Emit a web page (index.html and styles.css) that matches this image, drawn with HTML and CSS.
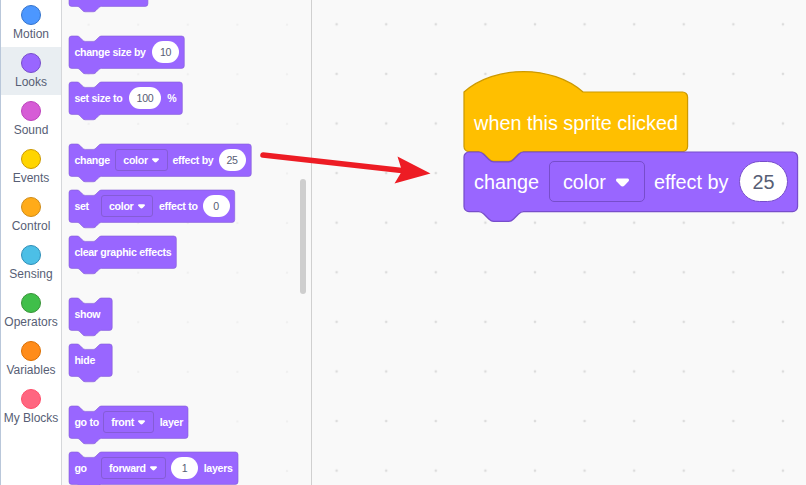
FILE: index.html
```html
<!DOCTYPE html>
<html lang="en">
<head>
<meta charset="utf-8">
<title>Block editor</title>
<link rel="stylesheet" href="styles.css">
</head>
<body>
<div class="editor">
  <nav class="categories">
    <div class="category"><i class="dot motion"></i><span>Motion</span></div>
    <div class="category selected"><i class="dot looks"></i><span>Looks</span></div>
    <div class="category"><i class="dot sound"></i><span>Sound</span></div>
    <div class="category"><i class="dot events"></i><span>Events</span></div>
    <div class="category"><i class="dot control"></i><span>Control</span></div>
    <div class="category"><i class="dot sensing"></i><span>Sensing</span></div>
    <div class="category"><i class="dot operators"></i><span>Operators</span></div>
    <div class="category"><i class="dot variables"></i><span>Variables</span></div>
    <div class="category"><i class="dot custom"></i><span>My Blocks</span></div>
  </nav>

  <section class="palette">
    <div class="block gap-after">
      <svg class="shape"><path transform="scale(.675)" d="M0 4A4 4 0 0 1 4 0H12c2 0 3 1 4 2l4 4c1 1 2 2 4 2h12c2 0 3-1 4-2l4-4c1-1 2-2 4-2H112.9a4 4 0 0 1 4 4v40a4 4 0 0 1-4 4H48c-2 0-3 1-4 2l-4 4c-1 1-2 2-4 2H24c-2 0-3-1-4-2l-4-4c-1-1-2-2-4-2H4a4 4 0 0 1-4-4z"/></svg>
    </div>
    <div class="block change-size">
      <svg class="shape"><path transform="scale(.675)" d="M0 4A4 4 0 0 1 4 0H12c2 0 3 1 4 2l4 4c1 1 2 2 4 2h12c2 0 3-1 4-2l4-4c1-1 2-2 4-2H166.8a4 4 0 0 1 4 4v40a4 4 0 0 1-4 4H48c-2 0-3 1-4 2l-4 4c-1 1-2 2-4 2H24c-2 0-3-1-4-2l-4-4c-1-1-2-2-4-2H4a4 4 0 0 1-4-4z"/></svg>
      <span>change size by</span><span class="value">10</span>
    </div>
    <div class="block set-size gap-after">
      <svg class="shape"><path transform="scale(.675)" d="M0 4A4 4 0 0 1 4 0H12c2 0 3 1 4 2l4 4c1 1 2 2 4 2h12c2 0 3-1 4-2l4-4c1-1 2-2 4-2H163.9a4 4 0 0 1 4 4v40a4 4 0 0 1-4 4H48c-2 0-3 1-4 2l-4 4c-1 1-2 2-4 2H24c-2 0-3-1-4-2l-4-4c-1-1-2-2-4-2H4a4 4 0 0 1-4-4z"/></svg>
      <span>set size to</span><span class="value wide">100</span><span>%</span>
    </div>
    <div class="block change-effect">
      <svg class="shape"><path transform="scale(.675)" d="M0 4A4 4 0 0 1 4 0H12c2 0 3 1 4 2l4 4c1 1 2 2 4 2h12c2 0 3-1 4-2l4-4c1-1 2-2 4-2H266a4 4 0 0 1 4 4v40a4 4 0 0 1-4 4H48c-2 0-3 1-4 2l-4 4c-1 1-2 2-4 2H24c-2 0-3-1-4-2l-4-4c-1-1-2-2-4-2H4a4 4 0 0 1-4-4z"/></svg>
      <span>change</span>
      <span class="menu color-menu">color<svg class="caret" viewBox="0 0 13 9"><path d="M2 .5h9c2 0 2.600 1.500 1.500 2.700L8.500 7.500c-1.200 1.200-2.800 1.200-4 0L.5 3.200C-.6 2 0 .5 2 .5z"/></svg></span>
      <span>effect by</span><span class="value">25</span>
    </div>
    <div class="block set-effect">
      <svg class="shape"><path transform="scale(.675)" d="M0 4A4 4 0 0 1 4 0H12c2 0 3 1 4 2l4 4c1 1 2 2 4 2h12c2 0 3-1 4-2l4-4c1-1 2-2 4-2H241.5a4 4 0 0 1 4 4v40a4 4 0 0 1-4 4H48c-2 0-3 1-4 2l-4 4c-1 1-2 2-4 2H24c-2 0-3-1-4-2l-4-4c-1-1-2-2-4-2H4a4 4 0 0 1-4-4z"/></svg>
      <span>set</span>
      <span class="menu color-menu">color<svg class="caret" viewBox="0 0 13 9"><path d="M2 .5h9c2 0 2.600 1.500 1.500 2.700L8.500 7.500c-1.200 1.200-2.800 1.200-4 0L.5 3.200C-.6 2 0 .5 2 .5z"/></svg></span>
      <span>effect to</span><span class="value">0</span>
    </div>
    <div class="block gap-after">
      <svg class="shape"><path transform="scale(.675)" d="M0 4A4 4 0 0 1 4 0H12c2 0 3 1 4 2l4 4c1 1 2 2 4 2h12c2 0 3-1 4-2l4-4c1-1 2-2 4-2H155a4 4 0 0 1 4 4v40a4 4 0 0 1-4 4H48c-2 0-3 1-4 2l-4 4c-1 1-2 2-4 2H24c-2 0-3-1-4-2l-4-4c-1-1-2-2-4-2H4a4 4 0 0 1-4-4z"/></svg>
      <span>clear graphic effects</span>
    </div>
    <div class="block">
      <svg class="shape"><path transform="scale(.675)" d="M0 4A4 4 0 0 1 4 0H12c2 0 3 1 4 2l4 4c1 1 2 2 4 2h12c2 0 3-1 4-2l4-4c1-1 2-2 4-2H60a4 4 0 0 1 4 4v40a4 4 0 0 1-4 4H48c-2 0-3 1-4 2l-4 4c-1 1-2 2-4 2H24c-2 0-3-1-4-2l-4-4c-1-1-2-2-4-2H4a4 4 0 0 1-4-4z"/></svg>
      <span>show</span>
    </div>
    <div class="block gap-after">
      <svg class="shape"><path transform="scale(.675)" d="M0 4A4 4 0 0 1 4 0H12c2 0 3 1 4 2l4 4c1 1 2 2 4 2h12c2 0 3-1 4-2l4-4c1-1 2-2 4-2H60a4 4 0 0 1 4 4v40a4 4 0 0 1-4 4H48c-2 0-3 1-4 2l-4 4c-1 1-2 2-4 2H24c-2 0-3-1-4-2l-4-4c-1-1-2-2-4-2H4a4 4 0 0 1-4-4z"/></svg>
      <span>hide</span>
    </div>
    <div class="block go-to">
      <svg class="shape"><path transform="scale(.675)" d="M0 4A4 4 0 0 1 4 0H12c2 0 3 1 4 2l4 4c1 1 2 2 4 2h12c2 0 3-1 4-2l4-4c1-1 2-2 4-2H172.3a4 4 0 0 1 4 4v40a4 4 0 0 1-4 4H48c-2 0-3 1-4 2l-4 4c-1 1-2 2-4 2H24c-2 0-3-1-4-2l-4-4c-1-1-2-2-4-2H4a4 4 0 0 1-4-4z"/></svg>
      <span>go to</span>
      <span class="menu front-menu">front<svg class="caret" viewBox="0 0 13 9"><path d="M2 .5h9c2 0 2.600 1.500 1.500 2.700L8.500 7.500c-1.200 1.200-2.800 1.200-4 0L.5 3.200C-.6 2 0 .5 2 .5z"/></svg></span>
      <span>layer</span>
    </div>
    <div class="block go-forward">
      <svg class="shape"><path transform="scale(.675)" d="M0 4A4 4 0 0 1 4 0H12c2 0 3 1 4 2l4 4c1 1 2 2 4 2h12c2 0 3-1 4-2l4-4c1-1 2-2 4-2H246.4a4 4 0 0 1 4 4v40a4 4 0 0 1-4 4H48c-2 0-3 1-4 2l-4 4c-1 1-2 2-4 2H24c-2 0-3-1-4-2l-4-4c-1-1-2-2-4-2H4a4 4 0 0 1-4-4z"/></svg>
      <span>go</span>
      <span class="menu forward-menu">forward<svg class="caret" viewBox="0 0 13 9"><path d="M2 .5h9c2 0 2.600 1.500 1.500 2.700L8.500 7.500c-1.200 1.200-2.800 1.200-4 0L.5 3.200C-.6 2 0 .5 2 .5z"/></svg></span>
      <span class="value">1</span><span>layers</span>
    </div>
    <div class="scrollbar"></div>
  </section>

  <main class="workspace">
    <div class="script">
      <div class="large hat">
        <svg class="shape"><path transform="scale(1.24)" d="M0 0c25-22 71-22 96 0H176.3a4 4 0 0 1 4 4v40a4 4 0 0 1-4 4H48c-2 0-3 1-4 2l-4 4c-1 1-2 2-4 2H24c-2 0-3-1-4-2l-4-4c-1-1-2-2-4-2H4a4 4 0 0 1-4-4z"/></svg>
        <span>when this sprite clicked</span>
      </div>
      <div class="large command">
        <svg class="shape"><path transform="scale(1.24)" d="M0 4A4 4 0 0 1 4 0H12c2 0 3 1 4 2l4 4c1 1 2 2 4 2h12c2 0 3-1 4-2l4-4c1-1 2-2 4-2H265a4 4 0 0 1 4 4v40a4 4 0 0 1-4 4H48c-2 0-3 1-4 2l-4 4c-1 1-2 2-4 2H24c-2 0-3-1-4-2l-4-4c-1-1-2-2-4-2H4a4 4 0 0 1-4-4z"/></svg>
        <span class="label">change</span>
        <span class="menu">color<svg class="caret" viewBox="0 0 13 9"><path d="M2 .5h9c2 0 2.600 1.500 1.500 2.700L8.500 7.500c-1.200 1.200-2.800 1.200-4 0L.5 3.200C-.6 2 0 .5 2 .5z"/></svg></span>
        <span class="label">effect by</span><span class="value">25</span>
      </div>
    </div>
  </main>

  <svg class="pointer" viewBox="0 0 180 40">
    <path class="stem" d="M8 10 149 25.7"/>
    <path class="head" d="M142.5 11.5 175.5 28.5 139.5 38.5 147 26z"/>
  </svg>
</div>
</body>
</html>
```

FILE: styles.css
```css
* { box-sizing: border-box; }

body {
  margin: 0;
  font-family: "Liberation Sans", Arial, sans-serif;
}

.editor {
  position: relative;
  display: flex;
  width: 806px;
  height: 485px;
  overflow: hidden;
  background: #f9f9f9;
}

/* Category column */
.categories {
  width: 62px;
  flex: none;
  border-left: 1px solid #b9c7da;
  border-right: 1px solid #d5d7da;
  background: #fff;
}
.category {
  display: flex;
  flex-direction: column;
  align-items: center;
  height: 48px;
  padding-top: 6px;
  font-size: 12px;
  line-height: 14px;
  color: #575e75;
  white-space: nowrap;
}
.category:first-child { margin-top: -1px; }
.category span { margin-top: 2px; }
.selected { background: #e9eef2; }
.dot {
  width: 20px;
  height: 20px;
  flex: none;
  border: 1px solid;
  border-radius: 50%;
}
.motion { background: #4c97ff; border-color: #3373cc; }
.looks { background: #96f; border-color: #774dcb; }
.sound { background: #d65cd6; border-color: #bd42bd; }
.events { background: #ffd500; border-color: #cc9900; }
.control { background: #ffab19; border-color: #cf8b17; }
.sensing { background: #4cbfe6; border-color: #2e8eb8; }
.operators { background: #40bf4a; border-color: #389438; }
.variables { background: #ff8c1a; border-color: #db6e00; }
.custom { background: #ff6680; border-color: #ff4d6a; }

/* Palette */
.palette {
  position: relative;
  display: flex;
  flex-direction: column;
  gap: 13.6px;
  width: 250px;
  flex: none;
  padding-left: 7px;
  margin-top: -26.3px;
  border-right: 1px solid #d0d0d0;
  background: radial-gradient(circle at 24.8px 24.8px, #f0f0f0 1px, transparent 1.6px) 1.8px 25.9px / 49.6px 49.6px;
}
.block {
  position: relative;
  display: grid;
  align-items: center;
  justify-content: start;
  height: 32.4px;
  flex: none;
  padding-left: 5.4px;
  font-size: 10.6px;
  font-weight: bold;
  letter-spacing: -.29px;
  line-height: 14px;
  color: #fff;
  white-space: nowrap;
}
.gap-after { margin-bottom: 16px; }
.shape {
  position: absolute;
  left: 0;
  top: 0;
  width: 1px;
  height: 1px;
  overflow: visible;
  fill: #96f;
  stroke: #774dcb;
}
.block .shape { stroke: #855cd6; stroke-width: .9; }
.block > span { position: relative; top: .3px; }
.change-size { grid-template-columns: 77.6px 27px; }
.set-size { grid-template-columns: 54.6px 38.3px 10px; }
.change-effect { grid-template-columns: 41.1px 57px 46.1px 27px; }
.set-effect { grid-template-columns: 26.8px 57.8px 43.7px 27px; }
.go-to { grid-template-columns: 29.1px 56.2px 24px; }
.go-forward { grid-template-columns: 26.8px 69.8px 32.7px 30px; }

.value {
  display: flex;
  align-items: center;
  justify-content: center;
  width: 27px;
  height: 21.6px;
  border-radius: 11px;
  background: #fff;
  font-weight: normal;
  color: #575e75;
}
.wide { width: 32px; }
.menu {
  display: flex;
  align-items: center;
  justify-content: space-between;
  height: 22px;
  padding: 0 7.6px 0 6.8px;
  border: 1px solid #855cd6;
  border-radius: 3px;
}
.color-menu { width: 52.3px; }
.front-menu { width: 50.5px; }
.forward-menu { width: 64.8px; }
.caret { width: 7px; height: 5px; flex: none; fill: #fff; }

.scrollbar {
  position: absolute;
  right: 5px;
  top: 205.3px;
  width: 6px;
  height: 115px;
  border-radius: 3px;
  background: #cecece;
}

/* Workspace */
.workspace {
  position: relative;
  flex: 1;
  background: radial-gradient(circle at 24.8px 24.8px, #dcdcdc 1px, transparent 1.7px) -.2px -.5px / 49.6px 49.6px;
}
.script {
  position: absolute;
  left: 152.2px;
  top: 92.3px;
}
.large {
  position: relative;
  display: grid;
  align-items: center;
  justify-content: start;
  height: 59.5px;
  padding-left: 9.9px;
  font-size: 19.84px;
  line-height: 24px;
  color: #fff;
  white-space: nowrap;
}
.large span { position: relative; }
.hat > span { top: 1px; }
.hat .shape { fill: #ffbf00; stroke: #cc9900; }
.command { grid-template-columns: 74.8px 105px 84.8px 50px; }
.command .label { top: .8px; }
.large .menu {
  width: 96px;
  height: 41px;
  padding: 1px 15px 0 13px;
  border-color: #774dcb;
  border-radius: 5px;
}
.large .caret { width: 13px; height: 9px; }
.large .value {
  width: 49.6px;
  height: 40.9px;
  padding-top: 1px;
  border: 1.2px solid #774dcb;
  border-radius: 20.5px;
}

/* Arrow laid over palette and workspace */
.pointer {
  position: absolute;
  left: 255px;
  top: 145px;
  width: 180px;
  height: 40px;
}
.stem { fill: none; stroke: #ed1c24; stroke-width: 5.6; stroke-linecap: round; }
.head { fill: #ed1c24; }
```
